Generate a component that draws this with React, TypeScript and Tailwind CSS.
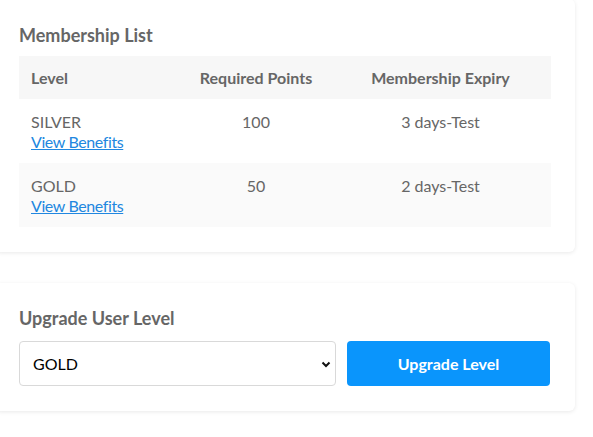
import React, { useState } from "react";

const levels = [
  { name: "SILVER", points: 100, expiry: "3 days-Test" },
  { name: "GOLD", points: 50, expiry: "2 days-Test" },
];

export default function App() {
  const [level, setLevel] = useState("GOLD");

  return (
    <div
      className="min-h-screen bg-white overflow-hidden"
      style={{ fontFamily: "Lato, 'Source Sans Pro', sans-serif" }}
    >
      <div className="w-[580px] -ml-[5px] -mt-px flex flex-col gap-[31px]">
        {/* Membership list */}
        <div className="bg-white rounded-md shadow-[0_1px_4px_rgba(0,0,0,0.09)] px-6 pt-[25px] pb-[25px]">
          <h2 className="text-[18px] leading-[22px] font-bold text-[#666] mb-[10px]">
            Membership List
          </h2>
          <table className="w-full text-[16px] text-[#666] border-collapse">
            <thead>
              <tr className="bg-[#f7f7f7]">
                <th className="w-[163px] text-left font-bold px-3 py-3 leading-[19px]">Level</th>
                <th className="w-[148px] text-center font-bold px-3 py-3 leading-[19px]">
                  Required Points
                </th>
                <th className="text-center font-bold px-3 py-3 leading-[19px]">
                  Membership Expiry
                </th>
              </tr>
            </thead>
            <tbody>
              {levels.map((l, i) => (
                <tr key={l.name} className={i % 2 === 1 ? "bg-[#fafafa]" : "bg-white"}>
                  <td className="px-3 pt-[13px] pb-[11px] align-top leading-[20px]">
                    <div>{l.name}</div>
                    <a href="#" className="text-[#2187e0] underline tracking-[-0.4px]">
                      View Benefits
                    </a>
                  </td>
                  <td className="px-3 pt-[13px] pb-[11px] align-top text-center leading-[20px]">
                    {l.points}
                  </td>
                  <td className="px-3 pt-[13px] pb-[11px] align-top text-center leading-[20px]">
                    {l.expiry}
                  </td>
                </tr>
              ))}
            </tbody>
          </table>
        </div>

        {/* Upgrade */}
        <div className="bg-white rounded-md shadow-[0_1px_4px_rgba(0,0,0,0.09)] px-6 pt-6 pb-[25px]">
          <h2 className="text-[18px] leading-[22px] font-bold text-[#666] mb-[12px]">
            Upgrade User Level
          </h2>
          <div className="flex gap-[11px]">
            <div className="relative w-[317px]">
              <select
                value={level}
                onChange={(e) => setLevel(e.target.value)}
                className="appearance-none w-full h-[45px] border border-[#d9d9d9] rounded-[4px] bg-white pl-[13px] text-[16px] text-black outline-none"
              >
                <option>SILVER</option>
                <option>GOLD</option>
              </select>
              <svg
                className="absolute right-[4px] top-1/2 -translate-y-1/2 pointer-events-none"
                width="12"
                height="12"
                viewBox="0 0 12 12"
              >
                <path d="M2.5 4.5 L6 8 L9.5 4.5" fill="none" stroke="#111" strokeWidth="2" />
              </svg>
            </div>
            <button className="w-[203px] h-[45px] rounded-[4px] bg-[#0a95fc] text-white font-bold text-[16px]">
              Upgrade Level
            </button>
          </div>
        </div>
      </div>
    </div>
  );
}
